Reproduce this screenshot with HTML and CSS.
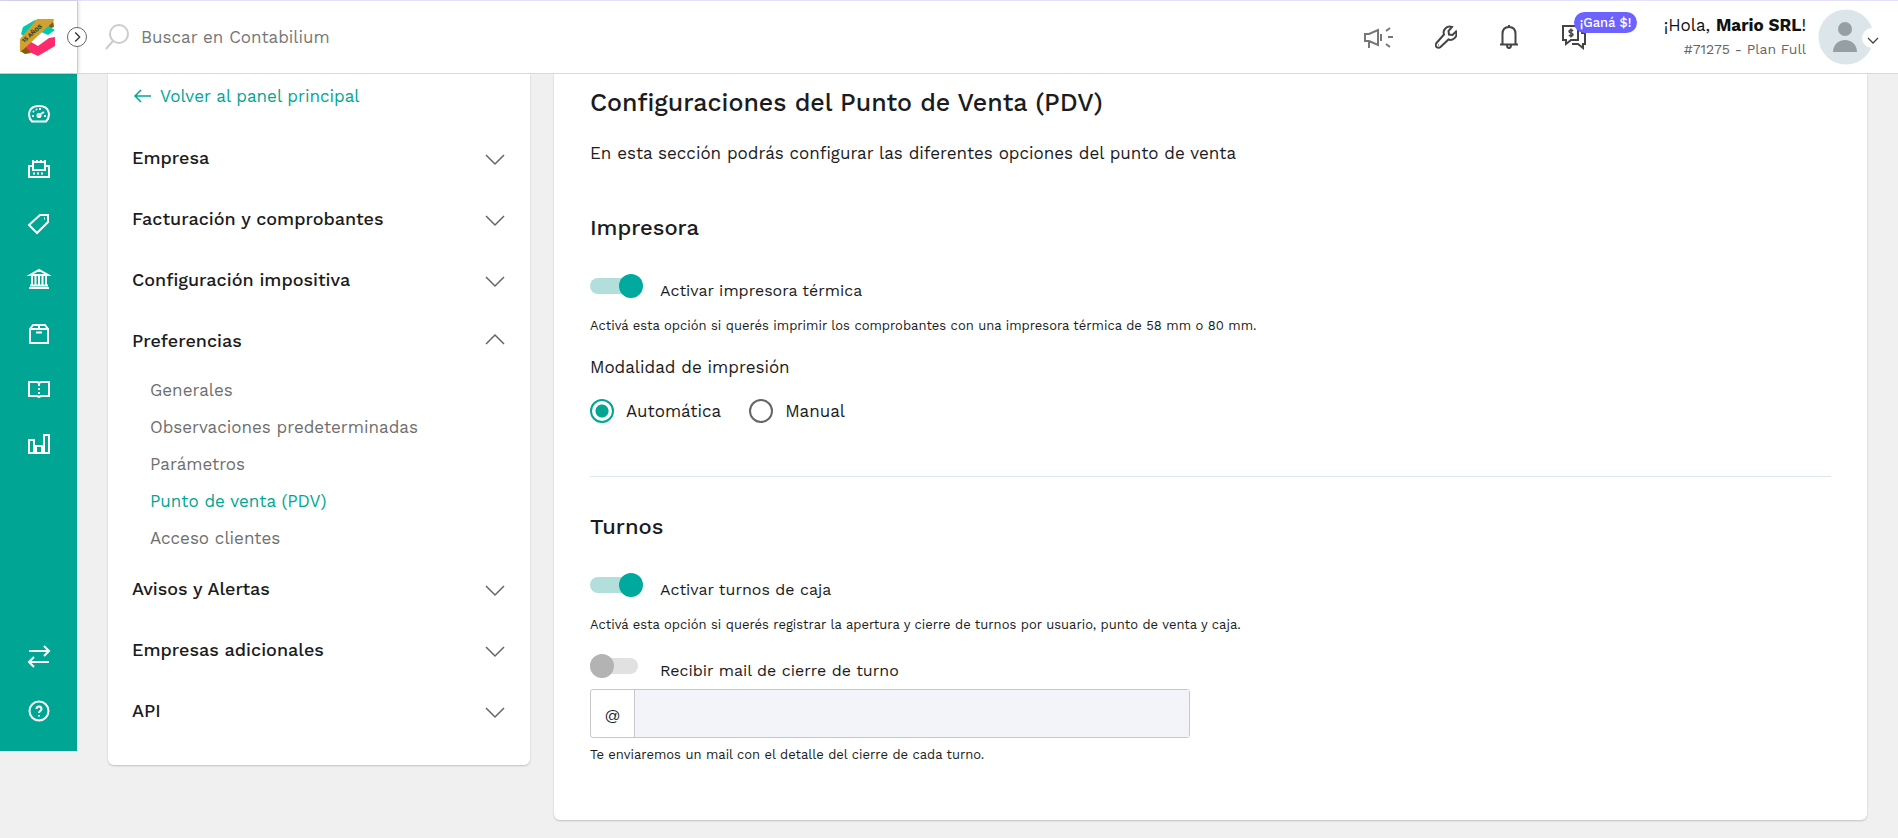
FILE: index.html
```html
<!DOCTYPE html>
<html lang="es">
<head>
  <meta charset="UTF-8">
  <meta name="viewport" content="width=device-width, initial-scale=1.0">
  <title>Configuraciones del Punto de Venta</title>
  <link rel="stylesheet" href="styles.css">
</head>

<body>
  <header class="topbar">
    <a href="#" class="logo" aria-label="Contabilium">
      <svg width="36" height="38" viewBox="0 0 36 38">
        <path d="M1 16l2-7L15 2l5 3L5 19z" fill="#00c9b1"/>
        <path d="M26 7l9 5-7 5-9-4z" fill="#00c9b1"/>
        <path d="M5 28l6-4 7 4 11-8 6-1v9L18 38 5 32z" fill="#ff2a6d"/>
        <path d="M33 2l1 7-3 1-3-2zM0 33l5 3 6-1-5-6z" fill="#8a5a0c"/>
        <path d="M17 1h17l-1 3L6 29l-6 5V21z" fill="#d0a030"/>
        <text x="4" y="25" class="logo-text" transform="rotate(-41 4 25)">15 AÑOS</text>
      </svg>
    </a>
    <button type="button" class="menu-toggle" aria-label="Expandir menú">
      <svg width="20" height="20" viewBox="0 0 20 20"><path d="M8 5l5 5-5 5"/></svg>
    </button>
    <form class="search">
      <svg width="24" height="26" viewBox="0 0 24 26"><circle cx="14" cy="10" r="9"/><path d="M8 17l-7 8"/></svg>
      <input type="text" aria-label="Buscar" placeholder="Buscar en Contabilium">
    </form>
    <nav class="top-actions">
      <button type="button" class="action muted" aria-label="Novedades">
        <svg width="30" height="24" viewBox="0 0 30 24"><path d="M2 9h4l9-4v15l-9-4H2zM6 16v7M18 9v7M23 6l4-3M25 12h5M23 19l4 3"/></svg>
      </button>
      <button type="button" class="action" aria-label="Herramientas">
        <svg width="22" height="24" viewBox="1 0 22 24"><path d="M18 2a6 6 0 0 0-8 7.500L2.500 18a2.800 2.800 0 0 0 4 4L14.500 14.500a6 6 0 0 0 7.500-8L18.500 10 15 9.500 14.500 6z"/><path d="M4.500 20h.5"/></svg>
      </button>
      <button type="button" class="action" aria-label="Notificaciones">
        <svg width="20" height="24" viewBox="0 0 20 24"><path d="M1 19.500h18M3.500 19V9c0-5 3-7 6.500-7s6.500 2 6.500 7v10M10 0v2M8 20c0 4 4 4 4 0"/></svg>
      </button>
      <button type="button" class="action" aria-label="Referidos">
        <svg width="26" height="26" viewBox="0 0 26 26"><path d="M17 2H2v14h3v4l5-4h7zM20 9h4v11h-2v4l-5-4h-6"/><path class="thin" d="M12 7c-1-1.500-4-1.500-4 .5s4 1 4 3-3 2-4 .5M10 4.500v9"/></svg>
        <span class="badge">¡Ganá $!</span>
      </button>
    </nav>
    <div class="user">
      <p class="user-name">¡Hola, <b>Mario SRL</b>!</p>
      <p class="user-plan">#71275 - Plan Full</p>
    </div>
    <button type="button" class="avatar" aria-label="Mi cuenta">
      <svg width="62" height="56" viewBox="0 0 62 56">
        <circle cx="28" cy="28" r="27.500" fill="#dce6ea"/>
        <circle cx="54" cy="29" r="10" fill="#fff"/>
        <circle cx="27" cy="20" r="7" fill="#969fa3"/>
        <path d="M15 43c0-7 5-12 12-12s12 5 12 12z" fill="#969fa3"/>
        <path d="M50 29l5 5 5-5" fill="none" stroke="#444" stroke-width="1.300"/>
      </svg>
    </button>
  </header>

  <div class="page">
    <nav class="rail" aria-label="Principal">
      <a href="#" aria-label="Panel"><svg viewBox="0 0 24 24"><path d="M5 19.500C0 14 1 4 12 4s12 10 7 15.500zM12 13l5-3"/><path class="dots" d="M5 14h2M6 9l1 1M9 7l1 1M13 6v2M19 14h-2"/><circle cx="12" cy="13.500" r="1.500"/></svg></a>
      <a href="#" aria-label="Ventas"><svg viewBox="0 0 24 24"><path d="M6 9H2v11h20V9h-4M6 13V5h12v8z"/><path class="dots" d="M6 16.500h12M5 4h14"/></svg></a>
      <a href="#" aria-label="Productos"><svg viewBox="0 0 24 24"><path d="M13 3h8v7L10 21l-8-8z"/><path d="M17 6.500h1"/></svg></a>
      <a href="#" aria-label="Bancos"><svg viewBox="0 0 24 24"><path d="M3 8l9-5 9 5zM2 21h20M3 18.500h18M5 9v9M8.500 9v9M12 9v9M15.500 9v9M19 9v9"/></svg></a>
      <a href="#" aria-label="Inventario"><svg viewBox="0 0 24 24"><path d="M3 7h18v14H3zM3 7l3-4h12l3 4M12 3v4M9 10.500h6"/></svg></a>
      <a href="#" aria-label="Contabilidad"><svg viewBox="0 0 24 24"><path d="M2 5h8l2 1 2-1h8v14h-8l-2 1-2-1H2z"/><path class="dots" d="M12 7v13"/></svg></a>
      <a href="#" aria-label="Reportes"><svg viewBox="0 0 24 24"><path d="M2 8h5v13H2zM9 14h6v7H9zM17 3h5v18h-5z"/></svg></a>
      <a href="#" class="rail-bottom" aria-label="Cambiar"><svg viewBox="0 0 24 24"><path d="M2 7h20M17 2l5 5-5 5M22 18H2M7 13l-5 5 5 5"/></svg></a>
      <a href="#" aria-label="Ayuda"><svg viewBox="0 0 24 24"><circle cx="12" cy="12" r="9.500"/><path d="M9.500 10c0-3.500 5-3.500 5 0 0 2-2.500 2-2.500 4M12 16v1.500"/></svg></a>
    </nav>

    <main class="content">
      <aside class="card side">
        <a href="#" class="back">
          <svg width="18" height="14" viewBox="0 0 18 14"><path d="M17 7H1M7 1L1 7l6 6"/></svg>
          Volver al panel principal
        </a>
        <button type="button" class="group">Empresa <svg class="chevron" viewBox="0 0 20 12"><path d="M1 1l9 9 9-9"/></svg></button>
        <button type="button" class="group">Facturación y comprobantes <svg class="chevron" viewBox="0 0 20 12"><path d="M1 1l9 9 9-9"/></svg></button>
        <button type="button" class="group">Configuración impositiva <svg class="chevron" viewBox="0 0 20 12"><path d="M1 1l9 9 9-9"/></svg></button>
        <button type="button" class="group open">Preferencias <svg class="chevron" viewBox="0 0 20 12"><path d="M1 11l9-9 9 9"/></svg></button>
        <ul class="submenu">
          <li><a href="#">Generales</a></li>
          <li><a href="#">Observaciones predeterminadas</a></li>
          <li><a href="#">Parámetros</a></li>
          <li><a href="#" class="active">Punto de venta (PDV)</a></li>
          <li><a href="#">Acceso clientes</a></li>
        </ul>
        <button type="button" class="group">Avisos y Alertas <svg class="chevron" viewBox="0 0 20 12"><path d="M1 1l9 9 9-9"/></svg></button>
        <button type="button" class="group">Empresas adicionales <svg class="chevron" viewBox="0 0 20 12"><path d="M1 1l9 9 9-9"/></svg></button>
        <button type="button" class="group">API <svg class="chevron" viewBox="0 0 20 12"><path d="M1 1l9 9 9-9"/></svg></button>
      </aside>

      <section class="card settings">
        <h1>Configuraciones del Punto de Venta (PDV)</h1>
        <p class="intro">En esta sección podrás configurar las diferentes opciones del punto de venta</p>

        <h2>Impresora</h2>
        <div class="switch-row">
          <input type="checkbox" class="switch" id="impresora" checked>
          <label for="impresora">Activar impresora térmica</label>
        </div>
        <p class="hint">Activá esta opción si querés imprimir los comprobantes con una impresora térmica de 58 mm o 80 mm.</p>
        <p class="mode-title" id="modalidad">Modalidad de impresión</p>
        <div class="radios" role="radiogroup" aria-labelledby="modalidad">
          <label><input type="radio" name="modo" checked> Automática</label>
          <label><input type="radio" name="modo"> Manual</label>
        </div>

        <hr>

        <h2>Turnos</h2>
        <div class="switch-row">
          <input type="checkbox" class="switch" id="turnos" checked>
          <label for="turnos">Activar turnos de caja</label>
        </div>
        <p class="hint">Activá esta opción si querés registrar la apertura y cierre de turnos por usuario, punto de venta y caja.</p>
        <div class="switch-row">
          <input type="checkbox" class="switch" id="mail-cierre">
          <label for="mail-cierre">Recibir mail de cierre de turno</label>
        </div>
        <div class="mail-group">
          <label for="mail">@</label>
          <input type="email" id="mail" disabled>
        </div>
        <p class="mail-hint">Te enviaremos un mail con el detalle del cierre de cada turno.</p>
      </section>
    </main>
  </div>
</body>
</html>
```

FILE: styles.css
```css
* {
  box-sizing: border-box;
}

body {
  margin: 0;
  min-height: 100vh;
  background-color: #f0f0f0;
  color: #1b1c1d;
  font-family: "Work Sans", Inter, sans-serif;
  font-size: 17px;
  line-height: 24px;
}

h1,
h2,
p,
ul {
  margin: 0;
  padding: 0;
}

a {
  color: inherit;
  text-decoration: none;
}

button,
input {
  font: inherit;
  color: inherit;
}

button {
  padding: 0;
  border: none;
  background: none;
  cursor: pointer;
}

svg {
  display: block;
}

/* Barra superior */
.topbar {
  position: relative;
  display: flex;
  align-items: center;
  height: 74px;
  background-color: #fff;
  border-top: 1px solid #e4e1fb;
  border-bottom: 1px solid #d9d9d9;
}

.logo {
  display: flex;
  align-items: center;
  width: 78px;
  height: 100%;
  padding-left: 20px;
  border-right: 1px solid #ccc;
  box-shadow: 0 0 4px rgba(0, 0, 0, 0.2);
}

.logo svg {
  overflow: visible;
}

.logo-text {
  font-size: 6px;
  font-weight: 700;
  fill: #33422a;
}

.menu-toggle {
  position: relative;
  margin-left: -11px;
  background-color: #fff;
  border: 1px solid #666;
  border-radius: 50%;
}

.menu-toggle svg {
  width: 18px;
  height: 18px;
  fill: none;
  stroke: #333;
  stroke-width: 1.5;
}

.search {
  display: flex;
  flex: 1;
  align-items: center;
  gap: 12px;
  margin-left: 18px;
}

.search svg {
  fill: none;
  stroke: #ccc;
  stroke-width: 2;
}

.search input {
  flex: 1;
  padding: 0;
  border: none;
  outline: none;
}

.search input::placeholder {
  color: #777;
  opacity: 1;
}

.top-actions {
  display: flex;
  align-items: center;
  gap: 42px;
}

.action {
  position: relative;
}

.action svg {
  fill: none;
  stroke: #444;
  stroke-width: 2;
}

.action .thin {
  stroke-width: 1.5;
}

.action.muted svg {
  stroke: #777;
}

.badge {
  position: absolute;
  top: -12px;
  left: 13px;
  padding: 0 6px;
  background-color: #6c63ff;
  border-radius: 12px;
  color: #fff;
  font-size: 13px;
  line-height: 21px;
  font-weight: 500;
  white-space: nowrap;
}

.user {
  margin-left: 77px;
  text-align: right;
}

.user-name {
  color: #111;
}

.user-plan {
  color: #666;
  font-size: 14px;
}

.avatar {
  margin: 0 18px 0 12px;
}

/* Menú lateral */
.page {
  display: flex;
  align-items: flex-start;
}

.rail {
  display: flex;
  flex-direction: column;
  gap: 31px;
  width: 77px;
  height: calc(100vh - 161px);
  min-height: 620px;
  padding: 28px 0;
  align-items: center;
  background-color: #00a693;
}

.rail svg {
  width: 24px;
  height: 24px;
  fill: none;
  stroke: #fff;
  stroke-width: 2;
}

.rail .dots {
  stroke-dasharray: 2 2;
}

.rail-bottom {
  margin-top: auto;
}

/* Contenido */
.content {
  display: flex;
  flex: 1;
  align-items: flex-start;
  gap: 24px;
  padding: 0 31px 18px;
}

.card {
  background-color: #fff;
  border-radius: 0 0 6px 6px;
  box-shadow: 0 1px 2px rgba(0, 0, 0, 0.2);
}

.side {
  flex: 0 0 422px;
  padding: 10px 24px 24px;
}

.back {
  display: flex;
  align-items: center;
  gap: 8px;
  margin-bottom: 19px;
  padding-left: 2px;
  color: #00a693;
}

.back svg {
  fill: none;
  stroke: #00a693;
  stroke-width: 1.5;
}

.group {
  display: flex;
  justify-content: space-between;
  align-items: center;
  width: 100%;
  height: 61px;
  font-size: 18px;
  font-weight: 500;
  text-align: left;
}

.chevron {
  width: 20px;
  height: 12px;
  margin-top: 4px;
  margin-right: 1px;
  fill: none;
  stroke: #666;
  stroke-width: 1.5;
}

.open .chevron {
  margin-top: 0;
  margin-bottom: 4px;
}

.submenu {
  padding: 1px 0 1px 18px;
  list-style: none;
  color: #6f6f6f;
}

.submenu a {
  display: block;
  line-height: 37px;
}

.submenu .active {
  color: #00a693;
}

.settings {
  flex: 1;
  padding: 11px 36px 53px;
}

.settings h1 {
  font-size: 25px;
  line-height: 36px;
  font-weight: 500;
}

.settings h2 {
  margin-bottom: 30px;
  font-size: 22px;
  line-height: 32px;
  font-weight: 500;
}

.intro {
  margin: 20px 0 47px;
}

.switch-row {
  display: flex;
  align-items: flex-start;
  gap: 18px;
  height: 32px;
}

.switch-row label {
  padding-top: 5px;
  font-size: 16px;
}

.switch {
  position: relative;
  width: 52px;
  height: 24px;
  margin: 0;
  appearance: none;
  cursor: pointer;
}

.switch::before {
  content: "";
  position: absolute;
  top: 4px;
  left: 0;
  width: 48px;
  height: 16px;
  border-radius: 8px;
  background-color: #e1e1e1;
}

.switch::after {
  content: "";
  position: absolute;
  top: 0;
  left: 0;
  width: 24px;
  height: 24px;
  border-radius: 50%;
  background-color: #b3b3b3;
}

.switch:checked::before {
  background-color: #b2dfdb;
}

.switch:checked::after {
  left: 29px;
  background-color: #00a99d;
}

.hint {
  margin: 8px 0 17px;
  font-size: 13px;
}

.radios {
  display: flex;
  gap: 28px;
  margin-top: 20px;
}

.radios label {
  display: flex;
  align-items: center;
  gap: 12px;
}

.radios input {
  width: 24px;
  height: 24px;
  margin: 0;
  appearance: none;
  border: 2px solid #666;
  border-radius: 50%;
}

.radios input:checked {
  border-color: #00a693;
  background: radial-gradient(circle, #00a693 6px, #fff 7px);
}

hr {
  margin: 53px 0 34px;
  border: none;
  border-top: 1px solid #e1e7f0;
}

.mail-group {
  display: flex;
  max-width: 600px;
  height: 49px;
  margin: 3px 0 5px;
  border: 1px solid #c6c6cb;
  border-radius: 3px;
}

.mail-group label {
  width: 44px;
  border-right: 1px solid #c6c6cb;
  line-height: 50px;
  font-size: 16px;
  text-align: center;
}

.mail-group input {
  flex: 1;
  padding: 0 12px;
  border: none;
  background-color: #f3f4f9;
}

.mail-hint {
  font-size: 13px;
}
```
